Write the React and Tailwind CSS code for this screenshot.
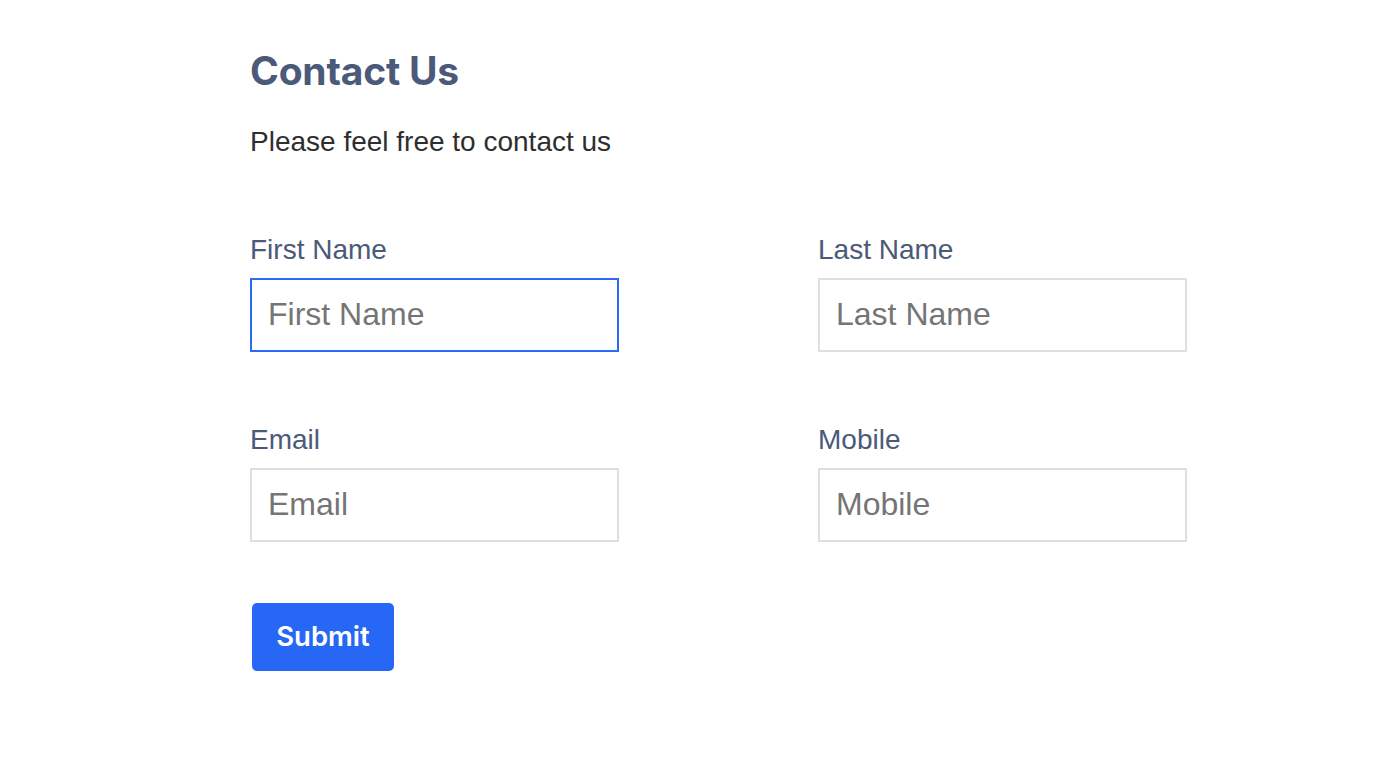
export default function App() {
  const fields = [
    { label: 'First Name', focus: true },
    { label: 'Last Name' },
    { label: 'Email' },
    { label: 'Mobile' },
  ];

  return (
    <div className="min-h-screen bg-white" style={{ fontFamily: '"Liberation Sans", Arial, sans-serif' }}>
      <div className="pl-[250px] pt-[51px]">
        <h1 className="font-['Inter',sans-serif] text-[39px] font-bold leading-none text-[#4b5a78] tracking-[-0.2px]">
          Contact Us
        </h1>
        <p className="mt-[38px] text-[28px] leading-none text-[#2e2e2e]">Please feel free to contact us</p>

        <form className="mt-[80px] grid grid-cols-[369px_369px] gap-x-[199px] gap-y-[74px]">
          {fields.map((f) => (
            <div key={f.label} className="flex flex-col">
              <label className="text-[28px] leading-none text-[#4b5a78]">{f.label}</label>
              <input
                placeholder={f.label}
                className={
                  'mt-[14px] h-[74px] w-[369px] border-2 bg-white px-[16px] pb-[2px] text-[32px] outline-none placeholder:text-[#757575] ' +
                  (f.focus ? 'border-[#2a6af5]' : 'border-[#dfdfe3]')
                }
              />
            </div>
          ))}
        </form>

        <button className="ml-[2px] mt-[61px] h-[68px] w-[142px] rounded-[5px] bg-[#2767f6] font-['Inter',sans-serif] text-[27.5px] font-semibold text-white">
          Submit
        </button>
      </div>
    </div>
  );
}
